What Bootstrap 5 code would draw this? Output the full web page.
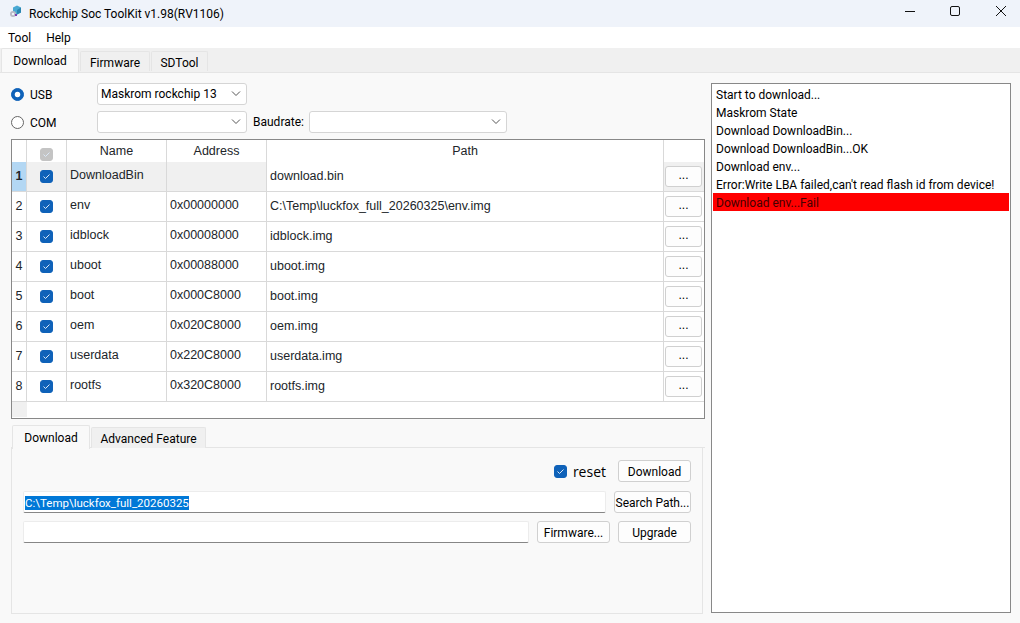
<!DOCTYPE html>
<html lang="en">
<head>
  <meta charset="UTF-8" />
  <meta name="viewport" content="width=device-width, initial-scale=1" />
  <title>Rockchip Soc ToolKit</title>
  <link href="https://cdn.jsdelivr.net/npm/bootstrap@5.3.3/dist/css/bootstrap.min.css" rel="stylesheet" />
  <style>
    html, body { height: 100%; overflow: hidden; }
    body { background: #f9f9f9; color: #000; font-family: Roboto, "Open Sans", sans-serif; font-size: 12px; }
    .win-title { height: 27px; background: #eff3fa; padding-left: 9px; }
    .win-title .title-text { margin-left: 6px; font-size: 12px; }
    .app-icon { margin-top: -3px; }
    .win-btns { gap: 35px; padding: 0 14px 5px 0; }
    .win-btns svg:last-child { margin-left: 1px; }
    .win-menu { height: 21px; background: #fff; padding-left: 8px; gap: 15px; }
    .tab-strip { border-bottom: 1px solid #e5e5e5; gap: 1px; padding-left: 1px; font-size: 12px; }
    .tab-strip .nav-link {
      color: #000; font-size: 12px; line-height: 16px; padding: 3px 0 1px; text-align: center; height: 20px; margin: 3px 0 -1px;
      background: #f0f0f0; border: 1px solid #e5e5e5; border-bottom: 0; border-radius: 2px 2px 0 0;
    }
    .tab-strip .nav-link.active { background: #f9f9f9; height: 24px; margin-top: 0; padding-top: 4px; padding-bottom: 3px; border-color: #e5e5e5; }
    .top-tabs { background: #f0f0f0; height: 25px; }
    .tab-first { width: 78px; }
    .tab-firmware { width: 70px; }
    .tab-sd { width: 57px; }
    .tab-adv { width: 115px; }
    .body-wrap { padding: 10px 9px 0 11px; gap: 6px; }
    .left-col { width: 694px; }
    .opt-row { height: 22px; margin-bottom: 6px; }
    .opt-radio { width: 86px; gap: 6px; font-size: 12px; padding-top: 1px; }
    .opt-radio .form-check-input { width: 13px; height: 13px; margin: -1px 0 0; background-color: #fff; border: 1px solid #666; }
    .opt-radio .form-check-input:checked { background-color: #0f62b9; border-color: #0f62b9; }
    .combo {
      height: 22px; width: 150px; padding: 0 20px 0 3px; font-size: 12px; line-height: 20px; color: #000;
      border: 1px solid #d5d5d5; border-radius: 3px; background-color: #fff; background-position: right 5px center; background-size: 10px 6px;
      background-image: url("data:image/svg+xml,%3csvg xmlns='http://www.w3.org/2000/svg' viewBox='0 0 10 6'%3e%3cpath fill='none' stroke='%23555' d='M1 .5l4 4 4-4'/%3e%3c/svg%3e");
    }
    .combo-wide { width: 198px; }
    .baud-label { width: 52px; margin: 0 4px 0 6px; }
    .grid-box { height: 280px; border: 1px solid #888; background: #fff; overflow: hidden; margin-bottom: 6px; }
    .grid-box .table { table-layout: fixed; width: 692px; margin: 0; font-size: 12.5px; border-collapse: separate; border-spacing: 0; font-family: "Liberation Sans", Arial, sans-serif; --bs-table-bg: transparent; --bs-table-border-color: #d9d9d9; }
    .grid-box th, .grid-box td { padding: 0 3px; height: 30px; vertical-align: middle; border: 0; border-right: 1px solid #d9d9d9; border-bottom: 1px solid #d9d9d9; font-weight: 400; }
    .grid-box thead th { height: 22px; text-align: center; border-bottom: 0; }
    .grid-box .num-cell { padding: 0; text-align: center; }
    .grid-box .corner { padding: 0; }
    .grid-box .sel-row td { background: #f0f0f0; }
    .grid-box .sel-row .path-cell { background: #fff; }
    .grid-box .sel-row .num-cell { background: #b3d7f3; font-weight: 700; }
    .grid-box .check-cell { padding: 0; text-align: center; line-height: 0; }
    .grid-box thead .check-cell { vertical-align: bottom; padding-bottom: 1px; }
    .grid-box .more-cell { padding: 0 2px 0 1px; border-right: 0; }
    .grid-box .lift-cell { padding-bottom: 2px; }
    .grid-filler { height: 15px; }
    .grid-filler div { width: 15px; height: 100%; background: #f0f0f0; }
    .form-check-input.blue-check {
      width: 13px; height: 13px; margin: 0; border-radius: 3px; background-color: #0f62b9; border: 1px solid #0f62b9; background-size: 9px 9px; vertical-align: middle; float: none; opacity: 1;
      background-image: url("data:image/svg+xml,%3csvg xmlns='http://www.w3.org/2000/svg' viewBox='0 0 9 9'%3e%3cpath fill='none' stroke='%23dbe8f6' d='M1.5 4.5l2 2 4-4'/%3e%3c/svg%3e");
    }
    .form-check-input.blue-check:disabled { background-color: #c4c4c4; border-color: #c4c4c4; opacity: 1; }
    .more-btn { width: 37px; height: 21px; padding: 0 0 4px; font-size: 12px; line-height: 14px; color: #000; background: #fdfdfd; border: 1px solid #d0d0d0; border-radius: 3px; display: block; }
    .low-tabs { height: 23px; border-bottom: 1px solid #e5e5e5; }
    .low-tabs .nav-link:not(.active) { margin-top: 2px; height: 21px; }
    .low-panel { height: 166px; width: 692px; border: 1px solid #e5e5e5; border-top: 0; padding: 12px 11px 0 11px; }
    .panel-row { height: 22px; margin-bottom: 9px; gap: 8px; }
    .panel-row + .panel-row { margin-bottom: 8px; }
    .reset-label { font-size: 14px; margin: 1px 4px 0 -2px; font-family: "Open Sans", sans-serif; }
    .act-btn { height: 22px; width: 73px; padding: 1px 0 0; font-size: 12px; line-height: 20px; color: #000; background: #fdfdfd; border: 1px solid #d0d0d0; border-radius: 3px; white-space: nowrap; }
    .act-btn-wide { width: 77px; }
    .path-input { height: 22px; padding: 0 1px; font-size: 11.5px; line-height: 22px; color: #000; background: #fff; border: 1px solid #ececec; border-bottom: 1px solid #868686; border-radius: 2px; }
    .path-input span { background: #0078d7; color: #fff; }
    .log-box { width: 300px; height: 530px; border: 1px solid #888; background: #fff; padding: 1px 1px; }
    .log-box div { height: 18px; line-height: 20px; padding-left: 3px; white-space: nowrap; overflow: hidden; }
    .log-box .log-fail { background: #f00; color: #400; }
  </style>
</head>
<body>
  <div class="win-title d-flex align-items-center">
    <svg class="app-icon" width="14" height="14" viewBox="0 0 14 14">
      <path d="M4 2.5L8 .5l4 2v5l-4 2-4-2z" fill="#4aa9d3"/>
      <path d="M8 5l4-2.5v5l-4 2z" fill="#2a86b0"/>
      <circle cx="4" cy="9" r="3" fill="#b9b9c4"/>
      <circle cx="4" cy="9" r="1.2" fill="#eff3fa"/>
      <rect x="6" y="9" width="2" height="2" fill="#7a3fb0"/>
    </svg>
    <span class="title-text flex-grow-1">Rockchip Soc ToolKit v1.98(RV1106)</span>
    <div class="win-btns d-flex align-items-center">
      <svg width="10" height="10" viewBox="0 0 10 10"><path d="M0 5.5h10" stroke="#111"/></svg>
      <svg width="10" height="10" viewBox="0 0 10 10"><rect x=".5" y=".5" width="9" height="9" rx="1.5" fill="none" stroke="#111"/></svg>
      <svg width="10" height="10" viewBox="0 0 10 10"><path d="M0 0l10 10M10 0L0 10" stroke="#111" fill="none"/></svg>
    </div>
  </div>
  <div class="win-menu d-flex align-items-center"><span>Tool</span><span>Help</span></div>
  <div class="nav tab-strip top-tabs">
    <a class="nav-link active tab-first">Download</a>
    <a class="nav-link tab-firmware">Firmware</a>
    <a class="nav-link tab-sd">SDTool</a>
  </div>

  <div class="body-wrap d-flex">
    <div class="left-col">
      <div class="opt-row d-flex align-items-center">
        <label class="opt-radio d-flex align-items-center"><input class="form-check-input" type="radio" name="port" checked />USB</label>
        <select class="form-select combo"><option>Maskrom rockchip 13</option></select>
      </div>
      <div class="opt-row d-flex align-items-center">
        <label class="opt-radio d-flex align-items-center"><input class="form-check-input" type="radio" name="port" />COM</label>
        <select class="form-select combo"><option></option></select>
        <span class="baud-label">Baudrate:</span>
        <select class="form-select combo combo-wide"><option></option></select>
      </div>

      <div class="grid-box">
        <table class="table">
          <colgroup>
            <col style="width:15px" /><col style="width:40px" /><col style="width:100px" /><col style="width:100px" /><col style="width:397px" /><col style="width:40px" />
          </colgroup>
          <thead>
            <tr>
              <th class="corner"></th>
              <th class="check-cell"><input class="form-check-input blue-check" type="checkbox" checked disabled /></th>
              <th>Name</th><th>Address</th><th>Path</th><th class="more-cell"></th>
            </tr>
          </thead>
          <tbody id="rows"></tbody>
        </table>
        <div class="grid-filler"><div></div></div>
      </div>

      <div class="nav tab-strip low-tabs">
        <a class="nav-link active tab-first">Download</a>
        <a class="nav-link tab-adv">Advanced Feature</a>
      </div>
      <div class="low-panel">
        <div class="panel-row d-flex align-items-center justify-content-end">
          <input class="form-check-input blue-check" type="checkbox" checked />
          <span class="reset-label">reset</span>
          <button class="btn act-btn">Download</button>
        </div>
        <div class="panel-row d-flex align-items-center">
          <div class="path-input flex-grow-1"><span>C:\Temp\luckfox_full_20260325</span></div>
          <button class="btn act-btn act-btn-wide">Search Path...</button>
        </div>
        <div class="panel-row d-flex align-items-center">
          <div class="path-input flex-grow-1"></div>
          <button class="btn act-btn">Firmware...</button>
          <button class="btn act-btn">Upgrade</button>
        </div>
      </div>
    </div>

    <div class="log-box">
      <div>Start to download...</div>
      <div>Maskrom State</div>
      <div>Download DownloadBin...</div>
      <div>Download DownloadBin...OK</div>
      <div>Download env...</div>
      <div>Error:Write LBA failed,can't read flash id from device!</div>
      <div class="log-fail">Download env...Fail</div>
    </div>
  </div>

<script>
  const parts = [
    ["DownloadBin", "", "download.bin"],
    ["env", "0x00000000", "C:\\Temp\\luckfox_full_20260325\\env.img"],
    ["idblock", "0x00008000", "idblock.img"],
    ["uboot", "0x00088000", "uboot.img"],
    ["boot", "0x000C8000", "boot.img"],
    ["oem", "0x020C8000", "oem.img"],
    ["userdata", "0x220C8000", "userdata.img"],
    ["rootfs", "0x320C8000", "rootfs.img"]
  ];

  document.getElementById("rows").innerHTML = parts.map((p, i) => `
    <tr class="${i === 0 ? "sel-row" : ""}">
      <td class="num-cell">${i + 1}</td>
      <td class="check-cell"><input class="form-check-input blue-check" type="checkbox" checked /></td>
      <td class="lift-cell">${p[0]}</td>
      <td class="lift-cell">${p[1]}</td>
      <td class="path-cell">${p[2]}</td>
      <td class="more-cell"><button class="btn more-btn">...</button></td>
    </tr>`).join("");
</script>
<script src="https://cdn.jsdelivr.net/npm/bootstrap@5.3.3/dist/js/bootstrap.bundle.min.js"></script>
</body>
</html>
